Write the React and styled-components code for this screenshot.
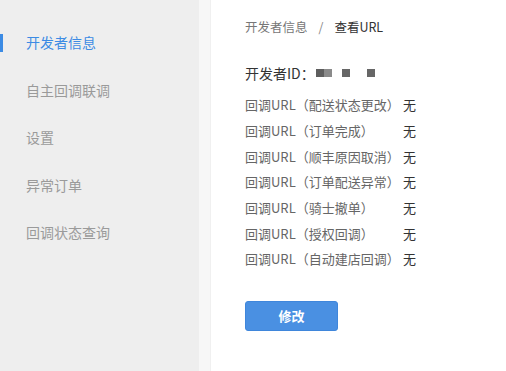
import React from "react";
import styled, { createGlobalStyle } from "styled-components";

const menu = ["开发者信息", "自主回调联调", "设置", "异常订单", "回调状态查询"];

const urls = [
  "配送状态更改",
  "订单完成",
  "顺丰原因取消",
  "订单配送异常",
  "骑士撤单",
  "授权回调",
  "自动建店回调",
];

const GlobalStyle = createGlobalStyle`
  html, body {
    margin: 0;
    padding: 0;
    background: #fff;
  }
  body {
    font-family: "Noto Sans CJK SC", "Liberation Sans", sans-serif;
  }
`;

const App = () => (
  <>
    <GlobalStyle />
    <Page>
      <Sidebar>
        {menu.map((m, i) => (
          <MenuItem key={m} $active={i === 0}>
            {m}
          </MenuItem>
        ))}
      </Sidebar>
      <Gutter />
      <Main>
        <Breadcrumb>
          <span>开发者信息</span>
          <Sep>/</Sep>
          <Current>查看URL</Current>
        </Breadcrumb>

        <DevId>
          开发者ID：
          <Masked>
            <Block $c="#5e5e5e" />
            <Block $c="#8a8a8a" />
            <Block $c="#666" $ml={10} />
            <Block $c="#666" $ml={17} />
          </Masked>
        </DevId>

        <List>
          {urls.map((u) => (
            <Row key={u}>
              <RowLabel>回调URL（{u}）</RowLabel>
              <RowValue>无</RowValue>
            </Row>
          ))}
        </List>

        <Button>修改</Button>
      </Main>
    </Page>
  </>
);

const Page = styled.div`
  display: flex;
  width: 506px;
  height: 371px;
  overflow: hidden;
`;

const Sidebar = styled.nav`
  width: 199px;
  flex-shrink: 0;
  background: #eeeeee;
  padding-top: 30px;
  box-sizing: border-box;
  display: flex;
  flex-direction: column;
  gap: 23.5px;
`;

const MenuItem = styled.div`
  position: relative;
  height: 24px;
  line-height: 24px;
  padding-left: 26px;
  font-size: 14px;
  color: ${(p) => (p.$active ? "#3c8be4" : "#9a9a9a")};

  &::before {
    content: "";
    display: ${(p) => (p.$active ? "block" : "none")};
    position: absolute;
    left: 0;
    top: 4px;
    width: 3px;
    height: 18px;
    background: #3c8be4;
  }
`;

const Gutter = styled.div`
  width: 11px;
  flex-shrink: 0;
  background: #f7f7f7;
  border-right: 1px solid #f0f0f0;
`;

const Main = styled.main`
  flex: 1;
  padding: 17px 0 0 34px;
  display: flex;
  flex-direction: column;
  align-items: flex-start;
`;

const Breadcrumb = styled.div`
  font-size: 12.5px;
  line-height: 20px;
  color: #777;
`;

const Sep = styled.span`
  margin: 0 11px;
  color: #888;
`;

const Current = styled.span`
  color: #333;
`;

const DevId = styled.div`
  margin-top: 25px;
  display: flex;
  align-items: center;
  font-size: 14px;
  line-height: 22px;
  color: #333;
`;

const Masked = styled.span`
  display: flex;
  align-items: center;
  margin-left: 1px;
`;

const Block = styled.span`
  display: inline-block;
  width: 8px;
  height: 8px;
  background: ${(p) => p.$c};
  margin-left: ${(p) => p.$ml || 0}px;
`;

const List = styled.div`
  margin-top: 8px;
  display: flex;
  flex-direction: column;
`;

const Row = styled.div`
  display: flex;
  height: 25.7px;
  align-items: center;
  font-size: 13px;
`;

const RowLabel = styled.span`
  width: 158px;
  color: #666;
`;

const RowValue = styled.span`
  color: #333;
`;

const Button = styled.button`
  margin-top: 29px;
  width: 93px;
  height: 30px;
  border: 1px solid #3f86db;
  border-radius: 3px;
  background: #4a90e2;
  color: #fff;
  font-family: "Noto Sans CJK SC", "Liberation Sans", sans-serif;
  font-size: 13px;
  font-weight: 700;
  padding: 0;
`;

export default App;
